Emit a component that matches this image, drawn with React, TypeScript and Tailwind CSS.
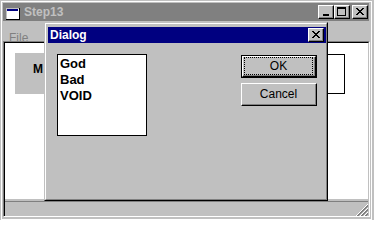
import React from "react";

const CloseGlyph = () => (
  <svg width="8" height="7" viewBox="0 0 8 7" shapeRendering="crispEdges">
    <path
      d="M0 0h2v1H0zM6 0h2v1H6zM1 1h2v1H1zM5 1h2v1H5zM2 2h4v1H2zM3 3h2v1H3zM2 4h4v1H2zM1 5h2v1H1zM5 5h2v1H5zM0 6h2v1H0zM6 6h2v1H6z"
      fill="#000"
    />
  </svg>
);

const MinGlyph = () => (
  <svg width="8" height="8" viewBox="0 0 8 8" shapeRendering="crispEdges">
    <path d="M1 6h6v2H1z" fill="#000" />
  </svg>
);

const MaxGlyph = () => (
  <svg width="9" height="9" viewBox="0 0 9 9" shapeRendering="crispEdges">
    <path d="M0 0h9v2H0zM0 2h1v7H0zM8 2h1v7H8zM0 8h9v1H0z" fill="#000" />
  </svg>
);

const CapBtn = ({ children }: { children: React.ReactNode }) => (
  <div className="w-[16px] h-[14px] bg-[#c0c0c0] border-t border-l border-t-white border-l-white border-r border-b border-r-black border-b-black">
    <div className="w-full h-full border-r border-b border-r-[#808080] border-b-[#808080] flex items-center justify-center">
      {children}
    </div>
  </div>
);

const WinIcon = () => (
  <svg width="14" height="12" viewBox="0 0 14 12" shapeRendering="crispEdges">
    <rect x="0" y="0" width="13" height="11" fill="#fff" />
    <rect x="0" y="0" width="13" height="1" fill="#c0c0c0" />
    <rect x="1" y="1" width="11" height="2" fill="#000080" />
    <rect x="0" y="0" width="1" height="11" fill="#c0c0c0" />
    <rect x="0" y="11" width="14" height="1" fill="#000" />
    <rect x="13" y="0" width="1" height="12" fill="#000" />
  </svg>
);

const Grip = () => (
  <svg width="12" height="12" viewBox="0 0 12 12">
    {[0, 4, 8].map((o) => (
      <g key={o}>
        <line x1={12} y1={o} x2={o} y2={12} stroke="#fff" strokeWidth={1} />
        <line x1={12} y1={o + 1} x2={o + 1} y2={12} stroke="#808080" strokeWidth={1} />
        <line x1={12} y1={o + 2} x2={o + 2} y2={12} stroke="#808080" strokeWidth={1} />
      </g>
    ))}
  </svg>
);

export default function App() {
  return (
    <div className="w-[374px] h-[220px] bg-[#c0c0c0] relative overflow-hidden font-['Liberation_Sans',Arial,sans-serif] pl-[1px] pt-[1px]">
      <div className="w-[371px] h-[219px] border border-white p-[1px] flex flex-col">
        {/* Title bar */}
        <div className="h-[18px] mr-[1px] bg-[#808080] flex items-center pl-[3px] pr-[1px]">
          <div className="mt-[3px]">
            <WinIcon />
          </div>
          <span className="ml-[4px] text-[12px] font-bold leading-none text-[#c0c0c0]">Step13</span>
          <div className="ml-auto flex items-center">
            <CapBtn>
              <MinGlyph />
            </CapBtn>
            <CapBtn>
              <MaxGlyph />
            </CapBtn>
            <div className="ml-[2px]">
              <CapBtn>
                <CloseGlyph />
              </CapBtn>
            </div>
          </div>
        </div>
        {/* Menu bar */}
        <div className="h-[20px] pl-[6px] pt-[4px]">
          <span className="text-[12px] leading-none text-[#808080]">File</span>
        </div>
        {/* Client frame */}
        <div className="h-[176px] border-t border-l border-t-[#808080] border-l-[#808080] border-r border-b border-r-white border-b-white">
          <div className="h-full border-t border-l border-black border-r border-r-[#c0c0c0] flex flex-col">
            <div className="h-[156px] bg-white flex items-start pl-[10px] pt-[10px] pr-[23px]">
              <div className="w-[40px] h-[41px] bg-[#c0c0c0] pl-[18px] pt-[3px]">
                <span className="text-[12px] font-bold leading-none text-black whitespace-nowrap">M</span>
              </div>
              <div className="ml-auto mt-[1px] w-[60px] h-[40px] border border-black bg-white" />
            </div>
            <div className="h-[2px]" />
            <div className="flex-1 border-t border-t-[#808080] flex justify-end items-end">
              <Grip />
            </div>
          </div>
        </div>
      </div>

      {/* Dialog */}
      <div className="absolute left-[44px] top-[22px] w-[284px] h-[179px] bg-[#c0c0c0] border-t border-l border-t-[#c0c0c0] border-l-[#c0c0c0] border-r border-b border-r-black border-b-black">
        <div className="h-full border-t border-l border-t-white border-l-white border-r border-b border-r-[#808080] border-b-[#808080] pt-[3px] pl-[2px] flex flex-col">
          <div className="h-[16px] bg-[#000080] flex items-center pl-[2px] pr-[2px]">
            <span className="text-[12px] font-bold leading-none text-white">Dialog</span>
            <div className="ml-auto">
              <CapBtn>
                <CloseGlyph />
              </CapBtn>
            </div>
          </div>
          <div className="flex items-start">
            <div className="ml-[9px] mt-[11px] w-[90px] h-[82px] border border-black bg-white pl-[2px] pt-[1px]">
              {["God", "Bad", "VOID"].map((t) => (
                <div key={t} className="text-[13px] font-bold leading-[16px] text-black">
                  {t}
                </div>
              ))}
            </div>
            <div className="ml-auto mr-[9px] mt-[12px] flex flex-col gap-[5px]">
              <div className="w-[76px] h-[23px] border border-black">
                <div className="h-full border-t border-l border-t-white border-l-white border-r border-b border-r-black border-b-black">
                  <div className="h-full border-r border-b border-r-[#808080] border-b-[#808080] px-[1px]">
                    <div className="h-full border border-dotted border-black flex items-center justify-center">
                      <span className="text-[12px] leading-none text-black">OK</span>
                    </div>
                  </div>
                </div>
              </div>
              <div className="w-[76px] h-[23px] border-t border-l border-t-white border-l-white border-r border-b border-r-black border-b-black">
                <div className="h-full border-r border-b border-r-[#808080] border-b-[#808080] flex items-center justify-center">
                  <span className="text-[12px] leading-none text-black">Cancel</span>
                </div>
              </div>
            </div>
          </div>
        </div>
      </div>
    </div>
  );
}
